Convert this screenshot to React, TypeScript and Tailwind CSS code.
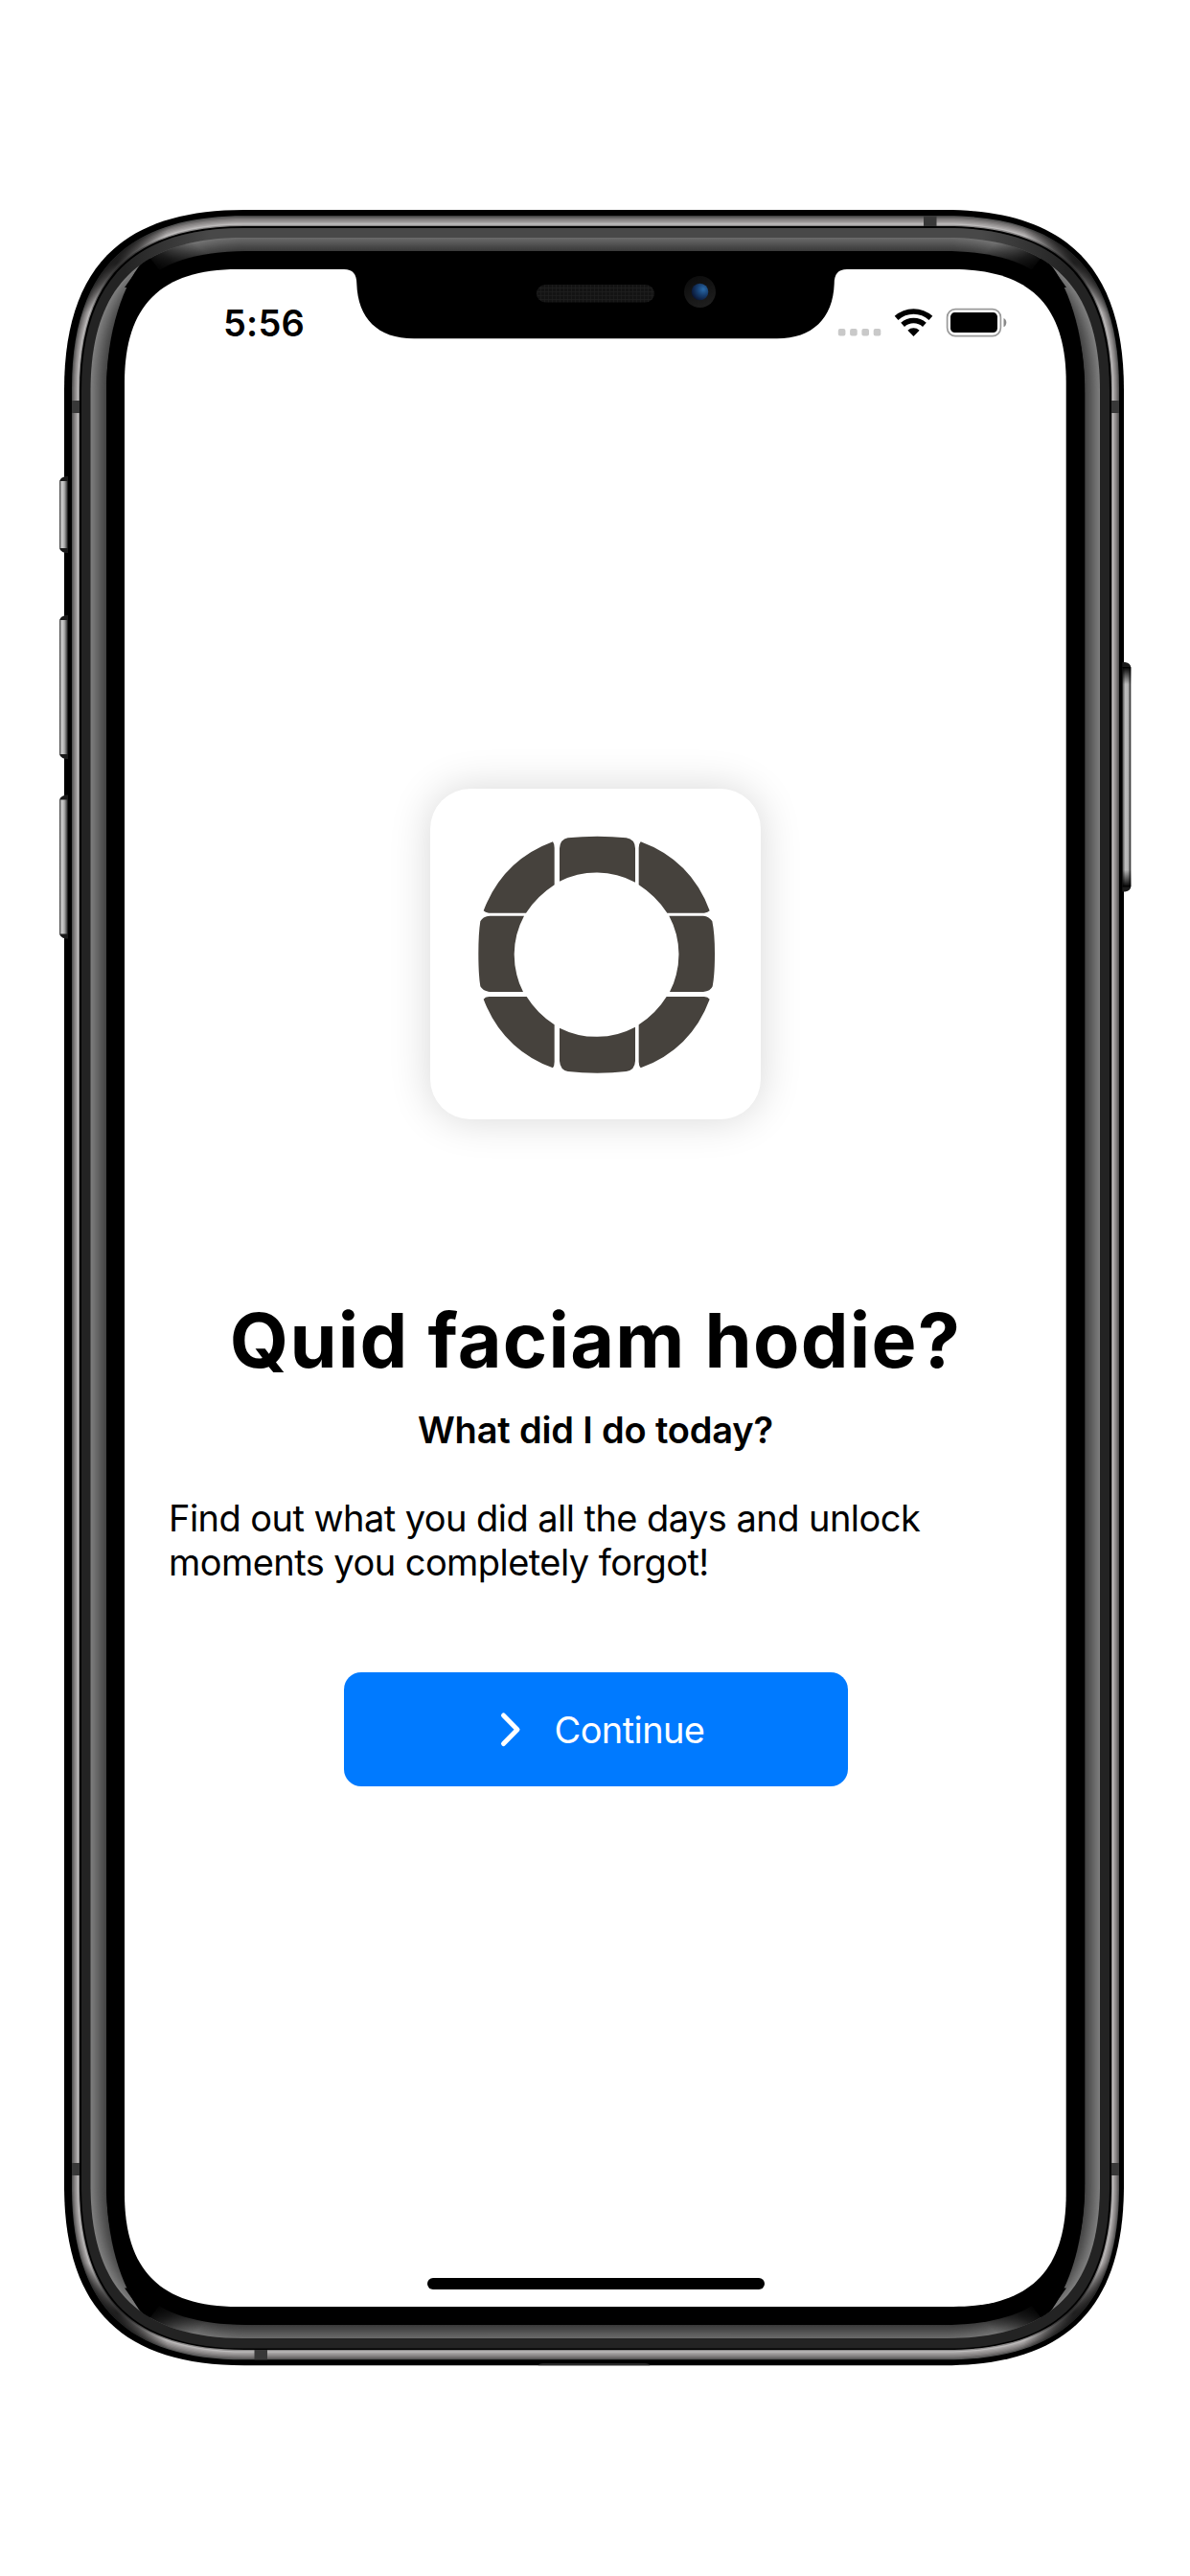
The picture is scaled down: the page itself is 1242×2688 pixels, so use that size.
const INTER = "font-['Inter',sans-serif]";

type Box = { l: number; t: number; r: number; b: number; e: number; k: number };

/** Rounded rectangle with continuous-curvature corners. */
function squircle({ l, t, r, b, e, k }: Box) {
  const c = e * k;
  return [
    `M${l} ${t + e}`,
    `C${l} ${t + c} ${l + c} ${t} ${l + e} ${t}`,
    `H${r - e}`,
    `C${r - c} ${t} ${r} ${t + c} ${r} ${t + e}`,
    `V${b - e}`,
    `C${r} ${b - c} ${r - c} ${b} ${r - e} ${b}`,
    `H${l + e}`,
    `C${l + c} ${b} ${l} ${b - c} ${l} ${b - e}`,
    "Z",
  ].join(" ");
}

const mix = (a: Box, z: Box, f: number): Box => ({
  l: a.l + (z.l - a.l) * f,
  t: a.t + (z.t - a.t) * f,
  r: a.r + (z.r - a.r) * f,
  b: a.b + (z.b - a.b) * f,
  e: a.e + (z.e - a.e) * f,
  k: a.k + (z.k - a.k) * f,
});

const OUTER: Box = { l: 67, t: 219, r: 1173, b: 2468.3, e: 188, k: 0.32 };
const RAIL_OUT: Box = { l: 75, t: 225.3, r: 1168, b: 2462.3, e: 180, k: 0.32 };
const RAIL_IN: Box = { l: 83, t: 236, r: 1160, b: 2452, e: 172, k: 0.32 };
const LIP_OUT: Box = { l: 85, t: 238, r: 1158, b: 2450.5, e: 170, k: 0.32 };
const BEVEL_OUT: Box = { l: 94.5, t: 248, r: 1148, b: 2440, e: 160, k: 0.32 };
const BEVEL_IN: Box = { l: 111, t: 262, r: 1132.3, b: 2426, e: 148, k: 0.3 };
const SCREEN: Box = { l: 130, t: 281, r: 1112.7, b: 2407, e: 118, k: 0.32 };

const RAIL_TONES = ["#555", "#6a6868", "#7c7979", "#8c8989", "#9a9797", "#a9a6a6", "#bdbbbb", "#8a8888"];
const BEVEL_STEPS = 16;

const FLIPS = [
  "translate(0 0)",
  "translate(1243 0) scale(-1 1)",
  "translate(0 2687.5) scale(1 -1)",
  "translate(1243 2687.5) scale(-1 -1)",
];

/** Tapers the side bevel to a point and lets the end bevel fade out. */
function BevelCorner({ flip }: { flip: string }) {
  return (
    <g transform={flip}>
      <path d="M154 266 L136 244 H260 V300 H130Z" fill="url(#cornerFade)" />
      <path d="M111 410 C111 345 128 296 154 266 L168 284 L130 400Z" fill="#000" />
    </g>
  );
}

function RailShade({ flip }: { flip: string }) {
  return (
    <ellipse cx="122" cy="274" rx="72" ry="26" transform={`${flip} rotate(-45 122 274)`} fill="url(#railShade)" />
  );
}

function SideButton({ x, y, h, right = false }: { x: number; y: number; h: number; right?: boolean }) {
  return (
    <g>
      <path
        d={
          right
            ? `M${x} ${y} h3 q6 1 6 6 v${h - 12} q0 5 -6 6 h-3Z`
            : `M${x + 9} ${y} h-3 q-6 2 -6 6 v${h - 12} q0 4 6 6 h3Z`
        }
        fill="#1a1a1a"
      />
      <rect
        x={x + 0.4}
        y={right ? y + 6 : y + 5}
        width="8"
        height={right ? h - 12 : h - 10}
        fill={right ? "url(#keyRight)" : "url(#keyLeft)"}
      />
      {right && <rect x={x} y={y + 5} width="9" height="18" fill="url(#keyTop)" />}
      {right && <rect x={x} y={y + h - 23} width="9" height="18" fill="url(#keyBottom)" />}
    </g>
  );
}

function DeviceFrame() {
  return (
    <svg className="pointer-events-none absolute inset-0 h-[2688px] w-[1242px]" viewBox="0 0 1242 2688" aria-hidden="true">
      <defs>
        <radialGradient id="railShade">
          <stop offset="0" stopColor="#000" stopOpacity="0.8" />
          <stop offset="0.4" stopColor="#000" stopOpacity="0.55" />
          <stop offset="1" stopColor="#000" stopOpacity="0" />
        </radialGradient>
        <linearGradient id="cornerFade" gradientUnits="userSpaceOnUse" x1="162" y1="282" x2="196" y2="246">
          <stop offset="0" stopColor="#000" />
          <stop offset="0.35" stopColor="#000" stopOpacity="0.75" />
          <stop offset="1" stopColor="#000" stopOpacity="0" />
        </linearGradient>
        <linearGradient id="endShade" gradientUnits="userSpaceOnUse" x1="160" y1="0" x2="1083" y2="0">
          <stop offset="0" stopColor="#000" stopOpacity="0" />
          <stop offset="0.1" stopColor="#000" stopOpacity="0.16" />
          <stop offset="0.9" stopColor="#000" stopOpacity="0.16" />
          <stop offset="1" stopColor="#000" stopOpacity="0" />
        </linearGradient>
        <linearGradient id="keyLeft">
          <stop offset="0" stopColor="#777" />
          <stop offset="0.3" stopColor="#d0d0d0" />
          <stop offset="0.6" stopColor="#aaa" />
          <stop offset="1" stopColor="#333" />
        </linearGradient>
        <linearGradient id="keyRight">
          <stop offset="0" stopColor="#555" />
          <stop offset="0.35" stopColor="#bbb" />
          <stop offset="0.7" stopColor="#b5b5b5" />
          <stop offset="1" stopColor="#444" />
        </linearGradient>
        <linearGradient id="keyTop" x1="0" y1="0" x2="0" y2="1">
          <stop offset="0" stopColor="#000" />
          <stop offset="1" stopColor="#000" stopOpacity="0" />
        </linearGradient>
        <linearGradient id="keyBottom" x1="0" y1="1" x2="0" y2="0">
          <stop offset="0" stopColor="#000" />
          <stop offset="1" stopColor="#000" stopOpacity="0" />
        </linearGradient>
        <linearGradient id="topLip" gradientUnits="userSpaceOnUse" x1="130" y1="0" x2="1113" y2="0">
          <stop offset="0" stopColor="#232323" />
          <stop offset="0.09" stopColor="#484848" />
          <stop offset="0.91" stopColor="#484848" />
          <stop offset="1" stopColor="#232323" />
        </linearGradient>
        <radialGradient id="lens" cx="0.7" cy="0.35" r="0.75">
          <stop offset="0" stopColor="#2a6aa8" />
          <stop offset="0.5" stopColor="#163c6c" />
          <stop offset="1" stopColor="#0a1330" />
        </radialGradient>
        <linearGradient id="lensRing" x1="0.3" y1="0" x2="0.7" y2="1">
          <stop offset="0" stopColor="#0c0c0c" />
          <stop offset="1" stopColor="#1f1f1f" />
        </linearGradient>
        <pattern id="mesh" width="4" height="4" patternUnits="userSpaceOnUse">
          <rect width="4" height="4" fill="#131313" />
          <path d="M0 0H4M0 0V4" stroke="#1e1e1e" strokeWidth="1.4" />
        </pattern>
        <clipPath id="lipClip">
          <rect x="0" y="0" width="1242" height="285" />
        </clipPath>
        <clipPath id="railClip">
          <path d={squircle(RAIL_OUT)} />
        </clipPath>
        <clipPath id="bevelClip">
          <path d={squircle(BEVEL_OUT)} />
        </clipPath>
      </defs>

      <path d={squircle(OUTER)} fill="#000" />
      {RAIL_TONES.map((tone, i) => (
        <path key={i} d={squircle(mix(RAIL_OUT, RAIL_IN, i / RAIL_TONES.length))} fill={tone} />
      ))}
      <g fill="#383838">
        <rect x="75" y="418" width="10" height="13" />
        <rect x="75" y="2257" width="10" height="13" />
        <rect x="1158" y="418" width="10" height="13" />
        <rect x="1158" y="2257" width="10" height="13" />
        <rect x="964" y="225.3" width="13.5" height="12" />
        <rect x="265.5" y="2450" width="13.5" height="12.3" />
      </g>
      <g clipPath="url(#railClip)">
        {FLIPS.map((flip) => (
          <RailShade key={flip} flip={flip} />
        ))}
      </g>
      <path d={squircle(RAIL_IN)} fill="#000" />
      <path d={squircle(LIP_OUT)} fill="#232323" />
      <path d={squircle(LIP_OUT)} fill="url(#topLip)" clipPath="url(#lipClip)" />
      {Array.from({ length: BEVEL_STEPS }, (_, i) => {
        const v = Math.round(126 - (i * 58) / (BEVEL_STEPS - 1));
        return <path key={i} d={squircle(mix(BEVEL_OUT, BEVEL_IN, i / BEVEL_STEPS))} fill={`rgb(${v},${v},${v})`} />;
      })}
      <g clipPath="url(#bevelClip)">
        <rect x="160" y="248" width="923" height="30" fill="url(#endShade)" />
        <rect x="160" y="2410" width="923" height="30" fill="url(#endShade)" />
        <path d={squircle(BEVEL_IN)} fill="#000" />
        {FLIPS.map((flip) => (
          <BevelCorner key={flip} flip={flip} />
        ))}
      </g>
      <path d="M561.7 2468.3 Q563 2466 567 2466 H673 Q677 2466 678.3 2468.3Z" fill="#2a2a2a" />

      <SideButton x={62} y={497} h={80} />
      <SideButton x={62} y={642} h={150} />
      <SideButton x={62} y={829.5} h={150} />
      <SideButton x={1171.3} y={691} h={239.5} right />

      <path d={squircle(SCREEN)} fill="#fff" />
      <path
        d="M356 280 V281 H359 C368 281 372.3 286 372.3 296 C373.5 332 394 353.3 432 353.3 H811 C848 353.3 869.5 332 870.7 296 C870.7 286 875 281 884 281 H887 V280Z"
        fill="#000"
      />
      <rect x="560" y="297" width="123" height="18.5" rx="9.25" fill="url(#mesh)" />
      <circle cx="730.5" cy="304.5" r="16.5" fill="url(#lensRing)" />
      <circle cx="730.5" cy="304.5" r="8.8" fill="url(#lens)" />
    </svg>
  );
}

function StatusIcons() {
  return (
    <svg className="h-[32px] w-[180px]" viewBox="0 0 180 32" aria-hidden="true">
      {[0, 12.3, 24.6, 36.9].map((x) => (
        <rect key={x} x={0.8 + x} y="22" width="7.6" height="7.6" rx="2" fill="#c9c9c9" />
      ))}
      <g fill="none" stroke="#000">
        <path d="M61.6 10.9 A26.5 26.5 0 0 1 97.4 10.9" strokeWidth="5.6" />
        <path d="M68.1 17.9 A17 17 0 0 1 90.9 17.9" strokeWidth="5.6" />
      </g>
      <path d="M79.5 30 L73.4 23.7 A8.8 8.8 0 0 1 85.6 23.7Z" fill="#000" />
      <rect x="114.6" y="1.6" width="55.8" height="28" rx="8.5" fill="none" stroke="#9a9a9a" strokeWidth="1.7" />
      <rect x="118" y="5.1" width="49" height="21" rx="4.5" fill="#000" />
      <path d="M173.5 10.9 Q176.3 12 176.3 15.5 Q176.3 19 173.5 20.2Z" fill="#8a8a8a" />
    </svg>
  );
}

function RingLogo() {
  return (
    <svg className="h-[248px] w-[248px]" viewBox="203 244 744 744" fill="#46423d" role="img" aria-label="Logo">
      <path d="M461 387 V284 Q463 255 487 251 Q530 246 579 246 Q628 246 670 251 Q697 255 698 284 V390 A256 256 0 0 0 461 387Z" />
      <path d="M461 846 V949 Q463 978 487 982 Q530 987 579 987 Q628 987 670 982 Q697 978 698 949 V843 A256 256 0 0 1 461 846Z" />
      <path d="M350 495 H243 Q222 497 213 512 Q207 550 207 613 Q207 680 213 716 Q222 731 243 733 H347 A256 256 0 0 1 350 495Z" />
      <path d="M804 495 H911 Q930 497 939 512 Q947 550 947 613 Q947 680 940 716 Q934 731 911 733 H806 A256 256 0 0 0 804 495Z" />
      <path d="M440 263 Q445 270 445 282 V398 Q391 433 356 486 H240 Q228 485 223 479 Q283 321 440 263Z" />
      <path d="M715 263 Q709 270 709 282 V398 Q763 433 798 486 H914 Q926 485 931 479 Q873 321 715 263Z" />
      <path d="M440 971 Q445 964 445 952 V836 Q391 801 358 748 H240 Q228 749 223 756 Q283 913 440 971Z" />
      <path d="M715 971 Q709 964 709 952 V836 Q763 801 796 748 H914 Q926 749 931 756 Q873 913 715 971Z" />
    </svg>
  );
}

export default function App() {
  return (
    <div className={`relative h-[2688px] w-[1242px] overflow-hidden bg-white text-black ${INTER}`}>
      <DeviceFrame />
      <main className="relative ml-[130px] flex h-[2688px] w-[983px] flex-col items-center pt-[281px]">
        <header className="flex h-[110px] w-full items-start justify-between pt-[40px] pr-[59px] pl-[103px]">
          <time className="text-[38px] leading-[32px] font-semibold tracking-[0.2px]">5:56</time>
          <StatusIcons />
        </header>

        <div className="mt-[432px] flex h-[345px] w-[345px] items-center justify-center rounded-[42px] bg-white shadow-[0_0_44px_rgba(0,0,0,0.16)]">
          <RingLogo />
        </div>

        <h1 className="mt-[180px] text-[79px] leading-[100px] font-bold tracking-[1.25px] whitespace-nowrap">Quid faciam hodie?</h1>
        <h2 className="mt-[21px] text-[38px] leading-[46px] font-semibold tracking-[-0.17px] whitespace-nowrap">What did I do today?</h2>
        <p className="mt-[46px] w-full pl-[46px] text-[38px] leading-[46px] tracking-[-0.55px] whitespace-nowrap">
          Find out what you did all the days and unlock
          <br />
          moments you completely forgot!
        </p>

        <button className="mt-[92px] flex h-[119px] w-[526px] shrink-0 items-center rounded-[18px] bg-[#007aff] pl-[162px] text-white">
          <svg
            className="mr-[34px] h-[40px] w-[24px]"
            viewBox="0 0 24 40"
            fill="none"
            stroke="currentColor"
            strokeWidth="5"
            strokeLinecap="round"
            strokeLinejoin="round"
            aria-hidden="true"
          >
            <path d="M4.5 5 L19 19.7 L4.5 34.5" />
          </svg>
          <span className="text-[38px] leading-[46px] tracking-[-0.6px]">Continue</span>
        </button>

        <div className="mt-auto mb-[299px] h-[12px] w-[352px] rounded-full bg-black" />
      </main>
    </div>
  );
}
